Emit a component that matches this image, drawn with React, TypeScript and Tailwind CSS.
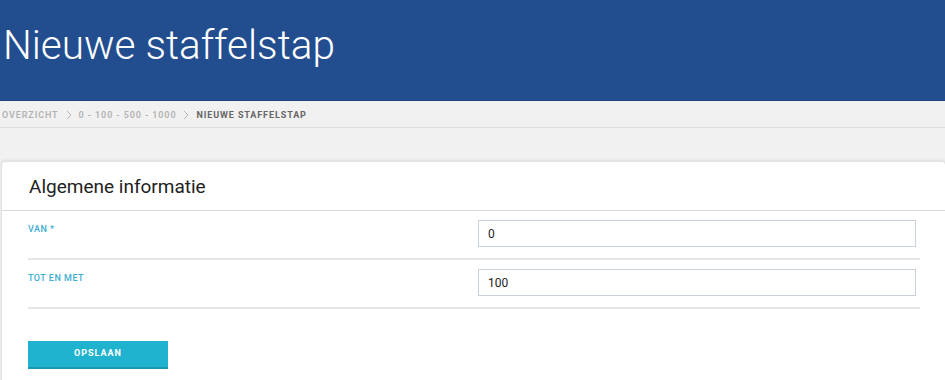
export default function App() {
  return (
    <div className="min-h-[380px] bg-[#f1f1f1] font-['Roboto',sans-serif] overflow-hidden">
      <header className="h-[101px] bg-[#224e8f] border-b border-[#1b4381] flex items-center">
        <h1 className="text-[40.5px] font-light text-white pl-[3px] -mt-[10px] leading-none">
          Nieuwe staffelstap
        </h1>
      </header>

      <nav className="h-[27px] border-b border-[#dcdcdc] flex items-center pl-[2px] pt-[3px] text-[9px] font-semibold tracking-[0.9px] uppercase">
        <span className="text-[#b3b3b3]">Overzicht</span>
        <Chevron />
        <span className="text-[#b3b3b3]">0 - 100 - 500 - 1000</span>
        <Chevron />
        <span className="text-[#666] font-bold">Nieuwe staffelstap</span>
      </nav>

      <section className="mt-[33px] ml-[1px] -mr-[1px] bg-white rounded-t-[4px] border border-[#e2e2e2] shadow-[0_-1px_3px_rgba(0,0,0,0.08)]">
        <div className="h-[49px] flex items-center pl-[27px] border-b border-[#dadada]">
          <h2 className="text-[19px] text-[#222] leading-none">Algemene informatie</h2>
        </div>

        <div className="pl-[26px] pr-[25px]">
          <Row label="Van *" value="0" />
          <Row label="Tot en met" value="100" />
          <div className="pt-[30px] pb-[24px]">
            <button className="w-[140px] h-[28px] bg-[#1fb3cf] border-b-2 border-[#1799b3] text-white text-[9px] font-bold tracking-[1px] uppercase">
              Opslaan
            </button>
          </div>
        </div>
      </section>
    </div>
  );
}

function Chevron() {
  return (
    <svg className="w-[10px] h-[10px] mx-[5px] -mt-[2px] text-[#b8b8b8]" viewBox="0 0 10 10" fill="none" stroke="currentColor" strokeWidth={1}>
      <path d="M3 1l4 4-4 4" />
    </svg>
  );
}

function Row({ label, value }: { label: string; value: string }) {
  return (
    <div className="grid grid-cols-2 h-[49px] border-b-2 border-[#e6e6e6]">
      <div className="pt-[12px] text-[9px] font-medium tracking-[0.5px] uppercase text-[#3aaed1]">
        {label}
      </div>
      <div className="pt-[9px] px-[4px]">
        <div className="h-[27px] border border-[#c9d1db] bg-white flex items-center pl-[9px] text-[12px] text-[#222]">
          {value}
        </div>
      </div>
    </div>
  );
}
